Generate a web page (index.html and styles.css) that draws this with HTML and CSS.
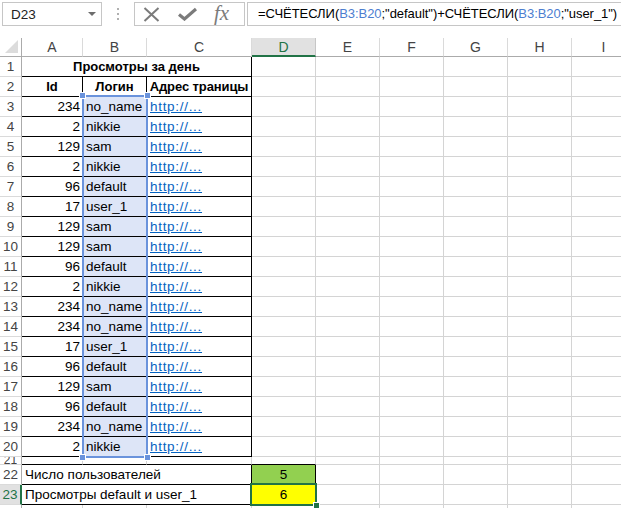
FILE: index.html
```html
<!DOCTYPE html>
<html>
<head>
<meta charset="utf-8">
<link rel="stylesheet" href="styles.css">
</head>
<body>
<div class="app">
  <div class="toolbar">
    <div class="namebox"><span class="nb-text">D23</span><span class="nb-arrow"></span></div>
    <div class="grip"><i></i><i></i><i></i></div>
    <div class="fxbox">
      <svg class="ic-x" width="17" height="15" viewBox="0 0 17 15"><path d="M1.5 1 L15.5 14 M15.5 1 L1.5 14" stroke="#7b7b7b" stroke-width="2" fill="none"/></svg>
      <svg class="ic-ok" width="19" height="14" viewBox="0 0 19 14"><path d="M1 7.5 L6.5 12 L18 2" stroke="#7b7b7b" stroke-width="3.2" fill="none" stroke-linejoin="miter"/></svg>
      <span class="ic-fx">fx</span>
    </div>
    <div class="formula">=СЧЁТЕСЛИ(<span class="ref">B3:B20</span>;"default")+СЧЁТЕСЛИ(<span class="ref">B3:B20</span>;"user_1")</div>
  </div>

  <div class="sheet">
    <div class="corner"><span class="tri"></span></div>
    <div class="ch">A</div><div class="ch">B</div><div class="ch">C</div><div class="ch sel-ch">D</div><div class="ch">E</div><div class="ch">F</div><div class="ch">G</div><div class="ch">H</div><div class="ch">I</div>

    <div class="rh">1</div><div class="c bk span3 bold ctr">Просмотры за день</div><div class="c"></div><div class="c"></div><div class="c"></div><div class="c"></div><div class="c"></div><div class="c"></div>

    <div class="rh">2</div><div class="c bk bold ctr">Id</div><div class="c bk bold ctr">Логин</div><div class="c bk bold ctr tight">Адрес траницы</div><div class="c"></div><div class="c"></div><div class="c"></div><div class="c"></div><div class="c"></div><div class="c"></div>

    <div class="rh">3</div><div class="c bk num">234</div><div class="c bk hl">no_name</div><div class="c bk"><span class="lnk">http://...</span></div><div class="c"></div><div class="c"></div><div class="c"></div><div class="c"></div><div class="c"></div><div class="c"></div>
    <div class="rh">4</div><div class="c bk num">2</div><div class="c bk hl">nikkie</div><div class="c bk"><span class="lnk">http://...</span></div><div class="c"></div><div class="c"></div><div class="c"></div><div class="c"></div><div class="c"></div><div class="c"></div>
    <div class="rh">5</div><div class="c bk num">129</div><div class="c bk hl">sam</div><div class="c bk"><span class="lnk">http://...</span></div><div class="c"></div><div class="c"></div><div class="c"></div><div class="c"></div><div class="c"></div><div class="c"></div>
    <div class="rh">6</div><div class="c bk num">2</div><div class="c bk hl">nikkie</div><div class="c bk"><span class="lnk">http://...</span></div><div class="c"></div><div class="c"></div><div class="c"></div><div class="c"></div><div class="c"></div><div class="c"></div>
    <div class="rh">7</div><div class="c bk num">96</div><div class="c bk hl">default</div><div class="c bk"><span class="lnk">http://...</span></div><div class="c"></div><div class="c"></div><div class="c"></div><div class="c"></div><div class="c"></div><div class="c"></div>
    <div class="rh">8</div><div class="c bk num">17</div><div class="c bk hl">user_1</div><div class="c bk"><span class="lnk">http://...</span></div><div class="c"></div><div class="c"></div><div class="c"></div><div class="c"></div><div class="c"></div><div class="c"></div>
    <div class="rh">9</div><div class="c bk num">129</div><div class="c bk hl">sam</div><div class="c bk"><span class="lnk">http://...</span></div><div class="c"></div><div class="c"></div><div class="c"></div><div class="c"></div><div class="c"></div><div class="c"></div>
    <div class="rh">10</div><div class="c bk num">129</div><div class="c bk hl">sam</div><div class="c bk"><span class="lnk">http://...</span></div><div class="c"></div><div class="c"></div><div class="c"></div><div class="c"></div><div class="c"></div><div class="c"></div>
    <div class="rh">11</div><div class="c bk num">96</div><div class="c bk hl">default</div><div class="c bk"><span class="lnk">http://...</span></div><div class="c"></div><div class="c"></div><div class="c"></div><div class="c"></div><div class="c"></div><div class="c"></div>
    <div class="rh">12</div><div class="c bk num">2</div><div class="c bk hl">nikkie</div><div class="c bk"><span class="lnk">http://...</span></div><div class="c"></div><div class="c"></div><div class="c"></div><div class="c"></div><div class="c"></div><div class="c"></div>
    <div class="rh">13</div><div class="c bk num">234</div><div class="c bk hl">no_name</div><div class="c bk"><span class="lnk">http://...</span></div><div class="c"></div><div class="c"></div><div class="c"></div><div class="c"></div><div class="c"></div><div class="c"></div>
    <div class="rh">14</div><div class="c bk num">234</div><div class="c bk hl">no_name</div><div class="c bk"><span class="lnk">http://...</span></div><div class="c"></div><div class="c"></div><div class="c"></div><div class="c"></div><div class="c"></div><div class="c"></div>
    <div class="rh">15</div><div class="c bk num">17</div><div class="c bk hl">user_1</div><div class="c bk"><span class="lnk">http://...</span></div><div class="c"></div><div class="c"></div><div class="c"></div><div class="c"></div><div class="c"></div><div class="c"></div>
    <div class="rh">16</div><div class="c bk num">96</div><div class="c bk hl">default</div><div class="c bk"><span class="lnk">http://...</span></div><div class="c"></div><div class="c"></div><div class="c"></div><div class="c"></div><div class="c"></div><div class="c"></div>
    <div class="rh">17</div><div class="c bk num">129</div><div class="c bk hl">sam</div><div class="c bk"><span class="lnk">http://...</span></div><div class="c"></div><div class="c"></div><div class="c"></div><div class="c"></div><div class="c"></div><div class="c"></div>
    <div class="rh">18</div><div class="c bk num">96</div><div class="c bk hl">default</div><div class="c bk"><span class="lnk">http://...</span></div><div class="c"></div><div class="c"></div><div class="c"></div><div class="c"></div><div class="c"></div><div class="c"></div>
    <div class="rh">19</div><div class="c bk num">234</div><div class="c bk hl">no_name</div><div class="c bk"><span class="lnk">http://...</span></div><div class="c"></div><div class="c"></div><div class="c"></div><div class="c"></div><div class="c"></div><div class="c"></div>
    <div class="rh">20</div><div class="c bk num">2</div><div class="c bk hl">nikkie</div><div class="c bk"><span class="lnk">http://...</span></div><div class="c"></div><div class="c"></div><div class="c"></div><div class="c"></div><div class="c"></div><div class="c"></div>

    <div class="rh short"><span class="rh-clip">21</span></div><div class="c bb"></div><div class="c bb"></div><div class="c bb"></div><div class="c bb"></div><div class="c"></div><div class="c"></div><div class="c"></div><div class="c"></div><div class="c"></div>

    <div class="rh">22</div><div class="c bk span3">Число пользователей</div><div class="c bk ctr green">5</div><div class="c"></div><div class="c"></div><div class="c"></div><div class="c"></div><div class="c"></div>
    <div class="rh sel-rh">23</div><div class="c bk span3">Просмотры default и user_1</div><div class="c bk ctr yellow">6</div><div class="c"></div><div class="c"></div><div class="c"></div><div class="c"></div><div class="c"></div>
    <div class="rh"></div><div class="c"></div><div class="c"></div><div class="c"></div><div class="c"></div><div class="c"></div><div class="c"></div><div class="c"></div><div class="c"></div><div class="c"></div>

    <div class="range-sel"><i class="h tl"></i><i class="h tr"></i><i class="h bl"></i><i class="h br"></i></div>
    <div class="active-sel"><i class="fill-h"></i></div>
  </div>
</div>
</body>
</html>
```

FILE: styles.css
```css
html, body {
  margin: 0;
  padding: 0;
  background: #fff;
}
body {
  width: 621px;
  height: 508px;
  overflow: hidden;
  font-family: "Liberation Sans", Arial, sans-serif;
}
.app {
  width: 621px;
  height: 508px;
  overflow: hidden;
}

/* toolbar */
.toolbar {
  height: 38px;
  display: flex;
  align-items: flex-start;
  padding-top: 2px;
  box-sizing: border-box;
  padding-left: 2px;
}
.namebox {
  width: 100px;
  height: 24px;
  border: 1px solid #c6c6c6;
  box-sizing: border-box;
  display: flex;
  align-items: center;
  justify-content: space-between;
  padding: 0 5px 0 8px;
}
.nb-text {
  font-size: 13.5px;
  color: #222;
}
.nb-arrow {
  width: 0;
  height: 0;
  border-left: 4px solid transparent;
  border-right: 4px solid transparent;
  border-top: 4px solid #6d6d6d;
}
.grip {
  width: 32px;
  height: 24px;
  display: flex;
  flex-direction: column;
  align-items: center;
  justify-content: center;
  gap: 3px;
}
.grip i {
  display: block;
  width: 2px;
  height: 2px;
  background: #b0b0b0;
}
.fxbox {
  width: 111px;
  height: 24px;
  border: 1px solid #c6c6c6;
  box-sizing: border-box;
  display: flex;
  align-items: center;
  padding-left: 8px;
}
.ic-x { margin-right: 18px; }
.ic-ok { margin-right: 17px; }
.ic-fx {
  font-family: "Liberation Serif", "DejaVu Serif", serif;
  font-style: italic;
  font-size: 21px;
  color: #7b7b7b;
  line-height: 1;
  margin-top: -2px;
}
.formula {
  margin-left: 2px;
  flex: 1;
  height: 24px;
  border: 1px solid #c6c6c6;
  border-right: none;
  box-sizing: border-box;
  padding-left: 10px;
  font-size: 13px;
  letter-spacing: -0.05px;
  line-height: 22px;
  white-space: nowrap;
  overflow: hidden;
  color: #000;
}
.ref { color: #4d7ed0; }

/* sheet */
.sheet {
  position: relative;
  display: grid;
  grid-template-columns: 22px 61px 64px 105px 64px 64px 64px 64px 64px 64px;
  grid-template-rows: 19px repeat(20, 20px) 8px 20px 20px 20px;
  width: 636px;
  font-size: 13.5px;
}
.corner {
  border-right: 1px solid #ababab;
  border-bottom: 1px solid #ababab;
  position: relative;
}
.tri {
  position: absolute;
  right: 3px;
  bottom: 3px;
  width: 0;
  height: 0;
  border-left: 13px solid transparent;
  border-bottom: 13px solid #dcdcdc;
}
.ch {
  border-right: 1px solid #dadada;
  border-bottom: 1px solid #ababab;
  box-sizing: border-box;
  text-align: center;
  color: #444;
  font-size: 14px;
  line-height: 19px;
}
.sel-ch {
  background: #e1e1e1;
  color: #217346;
  border-bottom: 2px solid #217346;
  border-right-color: #c6c6c6;
}
.rh {
  border-right: 1px solid #ababab;
  border-bottom: 1px solid #dadada;
  box-sizing: border-box;
  text-align: center;
  color: #444;
  font-size: 13.5px;
  line-height: 20px;
  overflow: hidden;
}
.rh.short {
  line-height: 7px;
  font-size: 12px;
}
.rh-clip {
  display: inline-block;
  height: 7px;
  overflow: hidden;
  vertical-align: top;
}
.sel-rh {
  background: #e1e1e1;
  color: #217346;
  border-right: 2px solid #217346;
}
.c {
  border-right: 1px solid #d4d4d4;
  border-bottom: 1px solid #d4d4d4;
  box-sizing: border-box;
  line-height: 20px;
  padding: 0 3px;
  white-space: nowrap;
  overflow: hidden;
  color: #000;
}
.bk {
  border-right-color: #000;
  border-bottom-color: #000;
}
.bb { border-bottom-color: #000; }
.span3 { grid-column: span 3; }
.bold { font-weight: bold; font-size: 13px; }
.tight { padding: 0; letter-spacing: -0.1px; }
.ctr { text-align: center; }
.num { text-align: right; padding-right: 2px; }
.hl { background: #dde5f7; }
.lnk {
  color: #0563c1;
  text-decoration: underline;
  letter-spacing: 0.7px;
}
.green { background: #92d050; }
.yellow { background: #ffff00; }

/* overlays */
.range-sel {
  position: absolute;
  grid-column: 3 / 4;
  grid-row: 4 / 22;
  top: -2px;
  left: -1px;
  right: -1px;
  bottom: -1px;
  border: 2px solid #6a93dc;
  pointer-events: none;
}
.h {
  position: absolute;
  width: 5px;
  height: 5px;
  background: #6a93dc;
  border: 1px solid #fff;
}
.h.tl { left: -5px; top: -5px; }
.h.tr { right: -5px; top: -5px; }
.h.bl { left: -5px; bottom: -5px; }
.h.br { right: -5px; bottom: -5px; }
.active-sel {
  position: absolute;
  grid-column: 5 / 6;
  grid-row: 24 / 25;
  top: -2px;
  left: -2px;
  right: -1px;
  bottom: -1px;
  border: 2px solid #217346;
}
.fill-h {
  position: absolute;
  right: -5px;
  bottom: -5px;
  width: 5px;
  height: 5px;
  background: #217346;
  border: 1px solid #fff;
}
```
